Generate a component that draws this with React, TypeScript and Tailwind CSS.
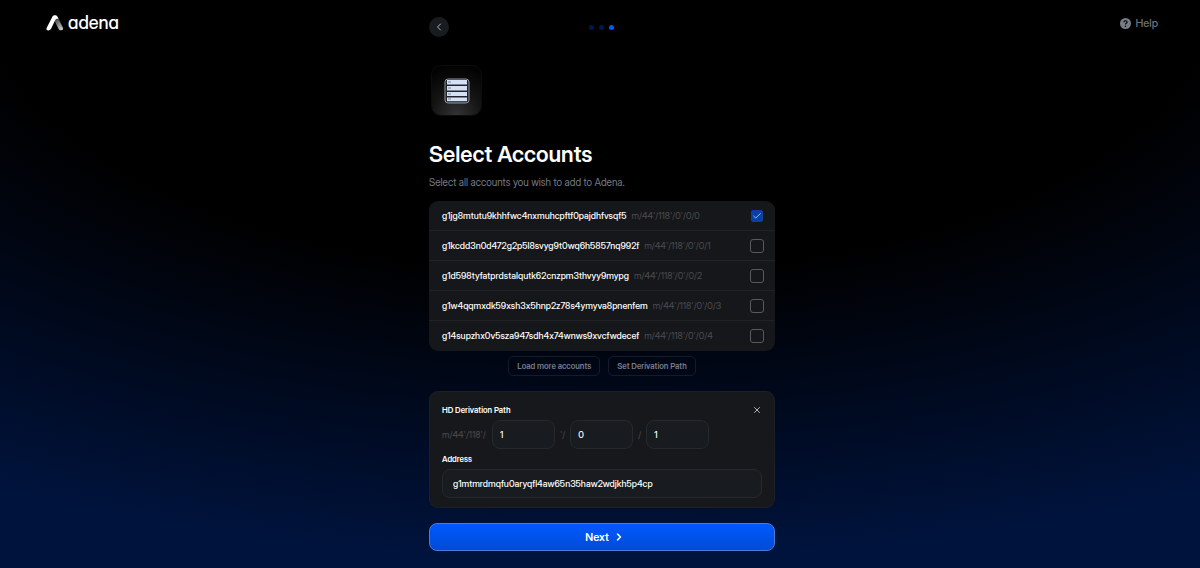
import { useState } from "react";
import { Check, ChevronLeft, ChevronRight, X } from "lucide-react";

const accounts = [
  { address: "g1jg8mtutu9khhfwc4nxmuhcpftf0pajdhfvsqf5", path: "m/44'/118'/0'/0/0" },
  { address: "g1kcdd3n0d472g2p5l8svyg9t0wq6h5857nq992f", path: "m/44'/118'/0'/0/1" },
  { address: "g1d598tyfatprdstalqutk62cnzpm3thvyy9mypg", path: "m/44'/118'/0'/0/2" },
  { address: "g1w4qqmxdk59xsh3x5hnp2z78s4ymyva8pnenfem", path: "m/44'/118'/0'/0/3" },
  { address: "g14supzhx0v5sza947sdh4x74wnws9xvcfwdecef", path: "m/44'/118'/0'/0/4" },
];

const Logo = () => (
  <a href="/" className="flex items-center gap-1 h-5">
    <svg width="18" height="16" viewBox="0 0 18 16" fill="none" aria-hidden="true">
      <defs>
        <linearGradient id="leg" x1="9" y1="5" x2="16" y2="15" gradientUnits="userSpaceOnUse">
          <stop stopColor="#444" />
          <stop offset="1" stopColor="#d0d0d0" />
        </linearGradient>
      </defs>
      <path d="M8.4 5.5 12.6 14c.5 1 1.500 1.500 2.700 1.300 1.500-.2 2.200-1.200 1.600-2.500L11.600 2Z" fill="url(#leg)" />
      <path d="M6.500 1.600C7 .6 7.800.2 9 .2c1.100 0 1.900.5 2.400 1.400l1.200 2.500c-1.600-.6-2.900 0-3.600 1.500L5.200 13.600c-.6 1.200-1.500 1.800-2.700 1.800-1.700 0-2.500-1.200-1.900-2.500Z" fill="#fff" />
    </svg>
    <span className="text-[18px] leading-5 font-medium text-white [font-feature-settings:'cv11']">adena</span>
  </a>
);

const ServerIcon = () => (
  <svg width="26" height="26" viewBox="0 0 26 26" aria-hidden="true">
    <rect x="1" y="1" width="24" height="24" rx="3" fill="#20242b" stroke="#8b929b" />
    <rect x="3" y="2" width="20" height="4.500" fill="#d5e0f6" />
    <rect x="3" y="8" width="20" height="4.500" fill="#d5e0f6" />
    <rect x="3" y="14" width="20" height="4" fill="#d5e0f6" />
    <rect x="3" y="19.500" width="20" height="3.500" fill="#d5e0f6" />
    <path d="M4 4h3M4 10h3M4 16h3M4 21h3" stroke="#7b8596" strokeWidth="1" />
    <path d="M3 24h20" stroke="#5f7488" strokeWidth="1" />
  </svg>
);

const SelectAccountsPage = () => {
  const [selected, setSelected] = useState([accounts[0].address]);
  const [segments, setSegments] = useState(["1", "0", "1"]);
  const [showPath, setShowPath] = useState(true);

  const toggle = (address: string) => {
    setSelected((prev) =>
      prev.includes(address) ? prev.filter((a) => a !== address) : [...prev, address]
    );
  };

  const changeSegment = (index: number, value: string) => {
    setSegments((prev) => prev.map((s, i) => (i === index ? value : s)));
  };

  return (
    <div className="grid grid-cols-[1fr_346px_1fr] items-start min-h-screen pl-[46px] pr-[42px] bg-black bg-[radial-gradient(ellipse_105%_100%_at_50%_0%,#000_48%,#00133c_98%)] font-['Inter_Display','Inter',sans-serif] text-white">
      <header className="pt-[13px]">
        <Logo />
      </header>

      <main className="flex flex-col pt-[17px] pb-4 [font-feature-settings:'calt'_0]">
        <div className="grid grid-cols-3 items-center">
          <button
            type="button"
            aria-label="Back"
            className="flex items-center justify-center size-5 rounded-full bg-[#181b20] text-[#b4b8bd]"
          >
            <ChevronLeft size={12} />
          </button>
          <div className="flex justify-center gap-[5px]">
            <span className="size-[5px] rounded-full bg-[#00184f]" />
            <span className="size-[5px] rounded-full bg-[#00184f]" />
            <span className="size-[5px] rounded-full bg-[#0059ff]" />
          </div>
        </div>

        <div className="flex items-center justify-center mt-7 ml-0.5 size-[51px] rounded-[10px] border border-[#0c0c0c] bg-[radial-gradient(ellipse_100%_100%_at_50%_100%,#333_0%,#141414_50%,#020202_100%)]">
          <ServerIcon />
        </div>

        <h1 className="mt-6 text-[22px] leading-7 font-semibold">Select Accounts</h1>
        <p className="mt-1.5 text-[10px] leading-4 text-[#777c87]">
          Select all accounts you wish to add to Adena.
        </p>

        <ul className="mt-[11px] rounded-[9px] bg-[#16171a]">
          {accounts.map(({ address, path }) => (
            <li key={address} className="border-b border-[#202226] last:border-transparent">
              <label className="flex items-center h-[29px] pl-[13px] pr-[11px] gap-[5px] text-[9px] font-medium">
                <span>{address}</span>
                <span className="font-normal text-[#4b4d52]">{path}</span>
                <span className="grid place-items-center size-[14px] ml-auto">
                  <input
                    type="checkbox"
                    checked={selected.includes(address)}
                    onChange={() => toggle(address)}
                    className="peer col-start-1 row-start-1 appearance-none size-[14px] rounded-[3px] border border-[#57595f] checked:size-3 checked:rounded-[2px] checked:border-[#0a3fa6] checked:bg-[#0a3fa6]"
                  />
                  <Check
                    size={10}
                    className="col-start-1 row-start-1 pointer-events-none text-[#c8d6f5] opacity-0 peer-checked:opacity-100"
                  />
                </span>
              </label>
            </li>
          ))}
        </ul>

        <div className="flex justify-center gap-2 mt-[5px] text-[8px] font-semibold text-[#777c8b]">
          <button type="button" className="h-5 px-2 rounded-[5px] border border-[#141b2c]">
            Load more accounts
          </button>
          <button
            type="button"
            onClick={() => setShowPath(true)}
            className="h-5 px-2 rounded-[5px] border border-[#141b2c]"
          >
            Set Derivation Path
          </button>
        </div>

        {showPath && (
          <section className="mt-[15px] px-3 pt-3 pb-[9px] rounded-[9px] border border-[#1c1f26] bg-[#17181b]">
            <div className="flex items-center justify-between h-3">
              <h2 className="text-[8px] font-semibold">HD Derivation Path</h2>
              <button
                type="button"
                aria-label="Close"
                onClick={() => setShowPath(false)}
                className="text-[#d0d2d6]"
              >
                <X size={10} />
              </button>
            </div>

            <div className="flex items-center mt-1 gap-[5px] text-[9px] text-[#4b4d52]">
              <span className="w-[45px] whitespace-nowrap">m/44'/118'/</span>
              <input
                aria-label="Account"
                value={segments[0]}
                onChange={(e) => changeSegment(0, e.target.value)}
                className="w-[63px] h-[29px] px-[7px] rounded-lg border border-[#25282d] bg-[#181b1f] font-medium text-white"
              />
              <span>'/</span>
              <input
                aria-label="Change"
                value={segments[1]}
                onChange={(e) => changeSegment(1, e.target.value)}
                className="w-[63px] h-[29px] px-[7px] rounded-lg border border-[#25282d] bg-[#181b1f] font-medium text-white"
              />
              <span>/</span>
              <input
                aria-label="Address index"
                value={segments[2]}
                onChange={(e) => changeSegment(2, e.target.value)}
                className="w-[63px] h-[29px] px-[7px] rounded-lg border border-[#25282d] bg-[#181b1f] font-medium text-white"
              />
            </div>

            <label htmlFor="address" className="block mt-1 text-[8px] leading-3 font-semibold">
              Address
            </label>
            <input
              id="address"
              readOnly
              value="g1mtmrdmqfu0aryqfl4aw65n35haw2wdjkh5p4cp"
              className="mt-1 w-full h-[29px] px-[10px] rounded-lg border border-[#25282d] bg-[#181b1f] text-[9px] font-medium"
            />
          </section>
        )}

        <button
          type="button"
          className="flex items-center justify-center gap-1 mt-[15px] pl-1.5 h-7 rounded-lg border border-[#4a7cd0] bg-linear-to-b from-[#0059ff] to-[#004bd6] text-[11px] font-semibold"
        >
          Next
          <ChevronRight size={12} strokeWidth={3} />
        </button>
      </main>

      <a href="/help" className="flex items-center justify-self-end gap-1 mt-[13px] h-5 text-[11px] font-medium text-[#6c717a]">
        <svg width="11" height="11" viewBox="0 0 12 12" aria-hidden="true">
          <circle cx="6" cy="6" r="6" fill="#777c85" />
          <path d="M4.200 4.700C4.200 3.600 5 3 6 3s1.800.6 1.800 1.600C7.800 5.800 6 5.700 6 7" fill="none" stroke="#000" strokeWidth="1.200" />
          <circle cx="6" cy="8.900" r=".8" fill="#000" />
        </svg>
        Help
      </a>
    </div>
  );
};

export default function App() {
  return <SelectAccountsPage />;
}
